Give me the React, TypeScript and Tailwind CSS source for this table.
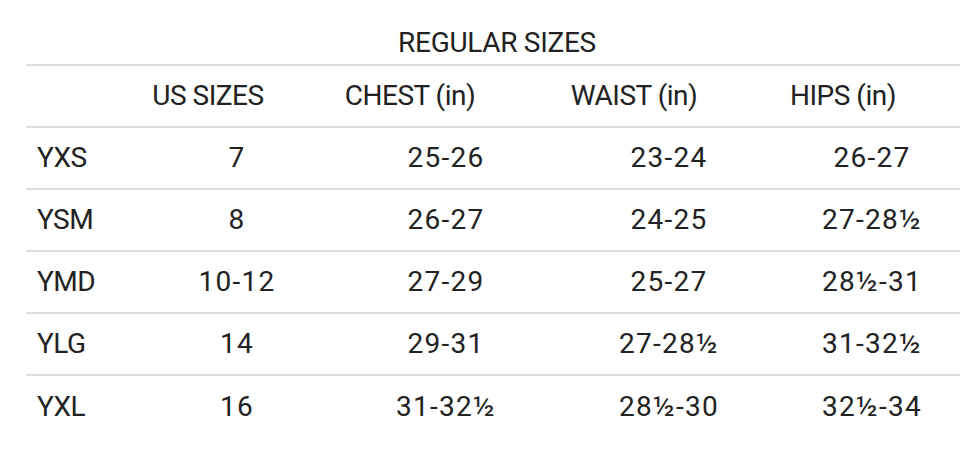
const rows = [
  ['YXS', '7', '25-26', '23-24', '26-27'],
  ['YSM', '8', '26-27', '24-25', '27-28½'],
  ['YMD', '10-12', '27-29', '25-27', '28½-31'],
  ['YLG', '14', '29-31', '27-28½', '31-32½'],
  ['YXL', '16', '31-32½', '28½-30', '32½-34'],
];

export default function App() {
  return (
    <div className="w-[960px] h-[474px] bg-white text-[#222] text-[28px] font-['Roboto',sans-serif] overflow-hidden">
      <div className="h-[64px] pt-[27px] pl-[34px] text-center leading-[32px] tracking-[-0.3px]">REGULAR SIZES</div>
      <div className="ml-[26px] border-t-2 border-[#ddd]">
        {/* header row */}
        <div className="flex h-[62px] items-center border-b-2 border-[#ddd] tracking-[-0.5px]">
          <div className="w-[104px]" />
          <div className="w-[214px] text-center pr-[58px]">US SIZES</div>
          <div className="w-[204px] text-center pr-[72px]">CHEST (in)</div>
          <div className="w-[242px] text-center pr-[70px]">WAIST (in)</div>
          <div className="w-[164px] text-center pr-[58px]">HIPS (in)</div>
        </div>
        {rows.map((r, i) => (
          <div
            key={r[0]}
            className={i < rows.length - 1 ? 'flex h-[62px] items-center border-b-2 border-[#ddd] tracking-[1.3px]' : 'flex h-[62px] items-center tracking-[1.3px]'}
          >
            <div className="w-[104px] pl-[11px] tracking-[-0.5px]">{r[0]}</div>
            <div className="w-[214px] text-center">{r[1]}</div>
            <div className="w-[204px] text-center">{r[2]}</div>
            <div className="w-[242px] text-center">{r[3]}</div>
            <div className="w-[164px] text-center">{r[4]}</div>
          </div>
        ))}
      </div>
    </div>
  );
}
